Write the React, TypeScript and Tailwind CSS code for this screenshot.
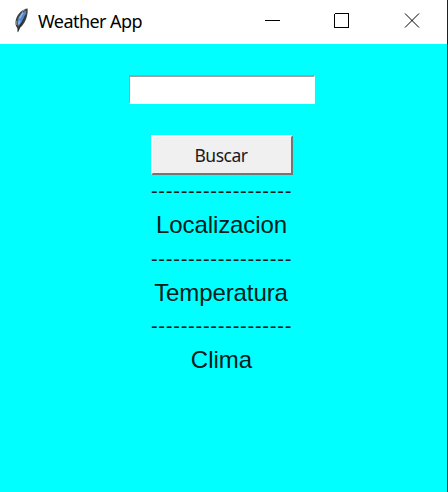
function Feather() {
  return (
    <svg width="20" height="26" viewBox="0 0 20 26" className="block">
      <path d="M16.6 1.5C12 1.8 6.6 6.5 4.9 12.5C4 16 4.4 19 6.2 21L6.8 25.5L9 20.8C14.2 17 17.4 8 16.6 1.5Z" fill="#3c3e40" />
      <path d="M15.2 3.6C10.9 5.5 7.2 9.5 6.4 14L6.8 19.2C11 16 15.2 10 15.2 3.6Z" fill="#4f86cc" />
      <path d="M12 5.5L8.4 11.5M8.8 13.5L7.4 17.5" stroke="#8fb4e0" strokeWidth="1.6" fill="none" />
      <path d="M14.5 8C12.5 13 9.5 18 6.9 24.5" stroke="#25282c" strokeWidth="0.9" fill="none" />
      <path d="M14.3 2.4L10.8 4.6M5.2 14V18" stroke="#a3a19c" strokeWidth="1" fill="none" />
    </svg>
  );
}

function Divider() {
  return (
    <div className="h-[34px] whitespace-nowrap pr-px text-center text-[20px] leading-[32px] tracking-[0.77px]">
      -------------------
    </div>
  );
}

function Label({ text, className }: { text: string; className: string }) {
  return (
    <div className={`h-[33.5px] text-center text-[24px] leading-[32px] ${className}`}>{text}</div>
  );
}

export default function App() {
  return (
    <div className="flex h-[492px] w-[448px] flex-col overflow-hidden border-r border-[#202020] bg-[#00ffff] text-[#002020]">
      <header className="flex h-11 shrink-0 bg-white text-black">
        <div className="w-[38px] pl-[11px] pt-[7px]">
          <Feather />
        </div>
        <div className="flex-1 whitespace-nowrap pt-[8px] font-['Noto_Sans',sans-serif] text-[18px] leading-[26px] tracking-[-0.55px]">
          Weather App
        </div>
        <svg width="184" height="44" viewBox="264 0 184 44" fill="none" stroke="black" shapeRendering="crispEdges">
          <path d="M266 20.5H281M335.5 13.5H349.5V27.5H335.5V13.5" />
          <path d="M406 13.5L420 27.5M420 13.5L406 27.5" shapeRendering="auto" strokeWidth="1" />
        </svg>
      </header>
      <main className="flex flex-col items-center pr-[3px] font-['Liberation_Sans',Arial,sans-serif]">
        <input
          aria-label="Localizacion"
          className="mt-[31px] h-[29px] w-[186px] rounded-none border-b border-l border-r border-t-2 border-b-[#f2ffff] border-l-[#a0a0a0] border-r-[#f2ffff] border-t-[#a0a0a0] bg-white px-1 outline-none"
        />
        <button className="mt-[31px] h-[40px] w-[142px] border-2 border-b-[#757575] border-l-white border-r-[#757575] border-t-white bg-[#f0f0f0] pr-[2px] font-['Noto_Sans',sans-serif] text-[17.5px] leading-[34px] tracking-[-0.5px] text-[#201820]">
          Buscar
        </button>
        <div className="w-full">
          <Divider />
          <Label text="Localizacion" className="pr-px tracking-[-0.1px]" />
          <Divider />
          <Label text="Temperatura" className="pr-[2px] tracking-[-0.1px]" />
          <Divider />
          <Label text="Clima" className="pr-px" />
        </div>
      </main>
    </div>
  );
}
